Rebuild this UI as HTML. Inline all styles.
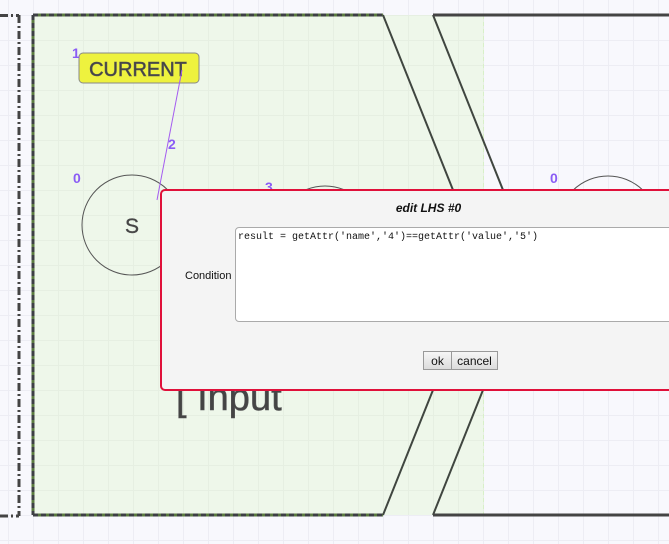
<!DOCTYPE html>
<html><head><style>
html,body{margin:0;padding:0;}
body{width:669px;height:544px;overflow:hidden;position:relative;background:#f8f8fd;font-family:"Liberation Sans",sans-serif;}
.dlg{position:absolute;left:160px;top:189px;width:520px;height:198px;border:2px solid #e0103a;border-radius:5px;background:#f4f4f4;}
.title{position:absolute;left:0;width:533px;top:10px;text-align:center;font:italic bold 12px "Liberation Sans",sans-serif;color:#111;}
.lbl{position:absolute;left:23px;top:79px;font-size:11px;color:#111;}
.ta{position:absolute;left:73px;top:36px;width:460px;height:95px;border:1px solid #aaa;border-radius:4px;background:#fff;font:10px "Liberation Mono",monospace;padding:4px 2px;box-sizing:border-box;color:#111;}
.btn{position:absolute;top:160px;height:19px;border:1px solid #999;background:linear-gradient(#f6f6f6,#dcdcdc);font-size:12px;color:#111;text-align:center;line-height:18px;box-sizing:border-box;}
</style></head><body>
<svg width="669" height="544" style="position:absolute;left:0;top:0">
<defs>
<pattern id="g" x="8" y="15" width="25" height="25" patternUnits="userSpaceOnUse">
<path d="M0 0V25M0 0H25" stroke="#ededf4" stroke-width="2" fill="none"/>
</pattern>
<pattern id="g2" x="8" y="15" width="25" height="25" patternUnits="userSpaceOnUse">
<path d="M0 0V25M0 0H25" stroke="#e6efe2" stroke-width="2" fill="none"/>
</pattern>
</defs>
<rect width="669" height="544" fill="url(#g)"/>
<rect x="33" y="15" width="451" height="500" fill="#eef7ea"/>
<rect x="33" y="15" width="451" height="500" fill="url(#g2)"/>
<line x1="483.5" y1="15" x2="483.5" y2="515" stroke="#d8f0c8" stroke-dasharray="4,3"/>
<path d="M33 15H383M33 515H383M33 15V515" stroke="#5a7a40" stroke-width="3" fill="none"/>
<path d="M33 15H383M33 515H383M33 15V515" stroke="#3d3f44" stroke-width="3" stroke-dasharray="5,3" fill="none"/>
<path d="M383 15L483 265L383 515" stroke="#404640" stroke-width="2" fill="none"/>
<path d="M433 15L533 265L433 515" stroke="#404640" stroke-width="2" fill="none"/>
<path d="M433 15H669M433 515H669" stroke="#444" stroke-width="3" fill="none"/>
<path d="M0 15.5H19M19 15V516M0 516H19" stroke="#444" stroke-width="3" stroke-dasharray="8,3,2,3" fill="none"/>
<circle cx="132" cy="225" r="50" fill="none" stroke="#555" stroke-width="1"/>
<circle cx="325" cy="236" r="50" fill="none" stroke="#555" stroke-width="1"/>
<circle cx="608" cy="226" r="50" fill="none" stroke="#555" stroke-width="1"/>
<text x="132" y="233" font-size="21" text-anchor="middle" fill="#444" stroke="#555" stroke-width="0.4" font-family="Liberation Sans">S</text>
<rect x="79" y="53" width="120" height="30" rx="4" fill="#eef23e" stroke="#888"/>
<text x="138" y="76" font-size="20" text-anchor="middle" fill="#444" stroke="#555" stroke-width="0.6" font-family="Liberation Sans">CURRENT</text>
<line x1="182" y1="70" x2="157" y2="200" stroke="#a45cf0" stroke-width="1"/>
<g fill="#8a5cf5" font-size="14" font-weight="bold" font-family="Liberation Sans">
<text x="72" y="58">1</text><text x="168" y="149">2</text><text x="73" y="183">0</text><text x="265" y="192">3</text><text x="550" y="183">0</text>
</g>
<text x="176" y="410" font-size="38" fill="#444" stroke="#555" stroke-width="0.6" font-family="Liberation Sans">[ Input</text>
</svg>
<div class="dlg">
<div class="title">edit LHS #0</div>
<div class="lbl">Condition</div>
<div class="ta">result = getAttr('name','4')==getAttr('value','5')</div>
<div class="btn" style="left:261px;width:29px;">ok</div>
<div class="btn" style="left:289px;width:47px;">cancel</div>
</div>
</body></html>
